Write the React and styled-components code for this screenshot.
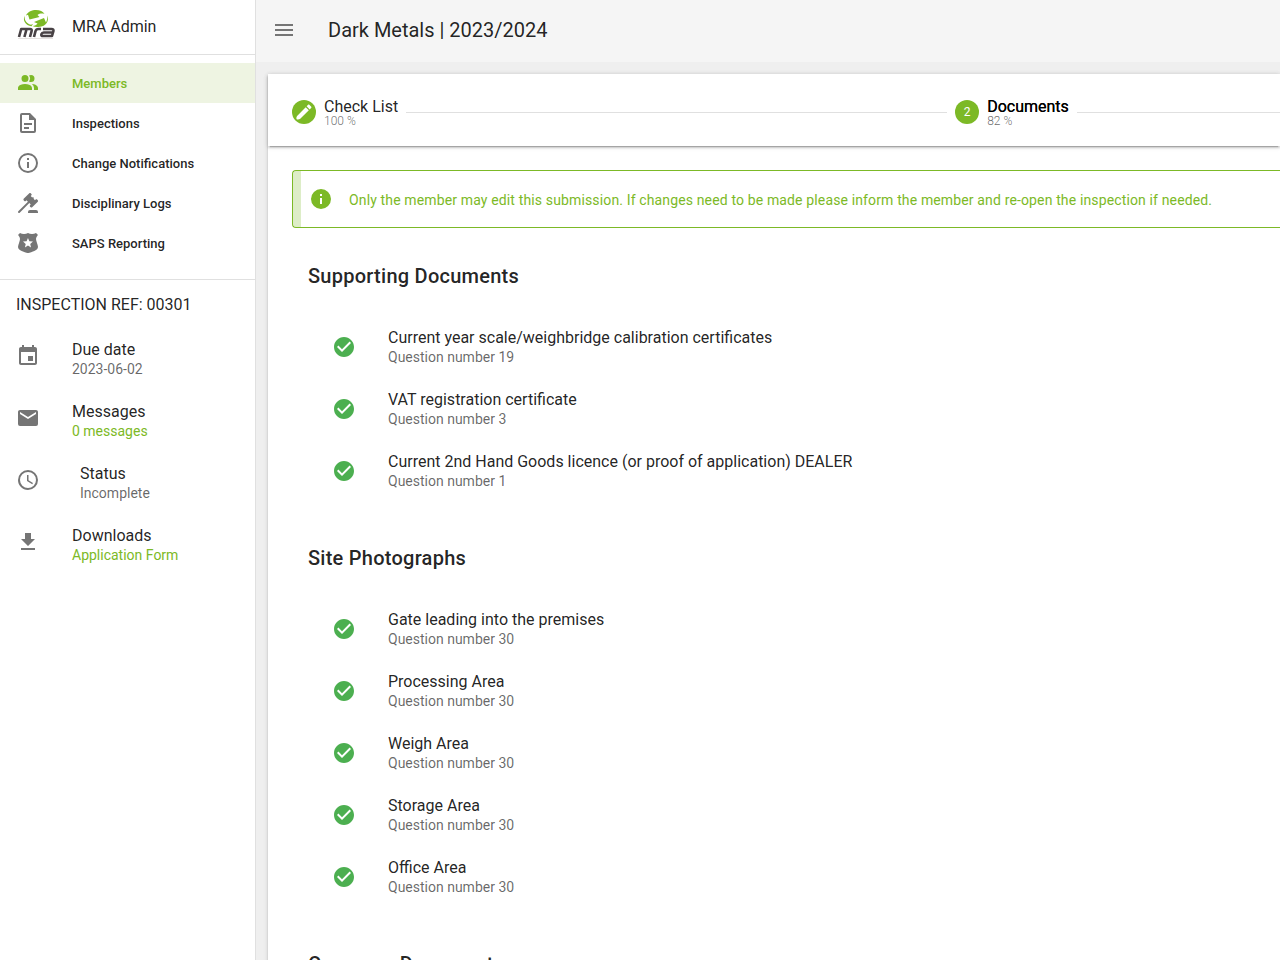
import React from "react";
import styled, { createGlobalStyle } from "styled-components";

const green = "#7cb926";
const ink = "rgba(0, 0, 0, 0.87)";
const muted = "rgba(0, 0, 0, 0.6)";
const line = "rgba(0, 0, 0, 0.12)";

const paths = {
  members:
    "M16 17V19H2V17S2 13 9 13 16 17 16 17M12.5 7.5A3.5 3.5 0 1 0 9 11A3.5 3.5 0 0 0 12.5 7.5M15.94 13A5.32 5.32 0 0 1 18 17V19H22V17S22 13.37 15.94 13M15 4A3.39 3.39 0 0 0 13.07 4.59A5 5 0 0 1 13.07 10.41A3.39 3.39 0 0 0 15 11A3.5 3.5 0 0 0 15 4Z",
  file: "M6,2A2,2 0 0,0 4,4V20A2,2 0 0,0 6,22H18A2,2 0 0,0 20,20V8L14,2H6M6,4H13V9H18V20H6V4M8,12V14H16V12H8M8,16V18H13V16H8Z",
  infoOutline:
    "M11,9H13V7H11M12,20C7.59,20 4,16.41 4,12C4,7.59 7.59,4 12,4C16.41,4 20,7.59 20,12C20,16.41 16.41,20 12,20M12,2A10,10 0 0,0 2,12A10,10 0 0,0 12,22A10,10 0 0,0 22,12A10,10 0 0,0 12,2M11,17H13V11H11V17Z",
  gavel:
    "M2.3,20.28L11.9,10.68L10.5,9.26L9.78,9.97C9.39,10.36 8.76,10.36 8.37,9.97L7.66,9.26C7.27,8.87 7.27,8.24 7.66,7.85L13.32,2.19C13.71,1.8 14.34,1.8 14.73,2.19L15.44,2.9C15.83,3.29 15.83,3.92 15.44,4.31L14.73,5L16.15,6.43C16.54,6.04 17.17,6.04 17.56,6.43C17.95,6.82 17.95,7.46 17.56,7.85L18.97,9.26L19.68,8.55C20.07,8.16 20.71,8.16 21.1,8.55L21.8,9.26C22.19,9.65 22.19,10.29 21.8,10.68L16.15,16.33C15.76,16.72 15.12,16.72 14.73,16.33L14.02,15.63C13.63,15.24 13.63,14.6 14.02,14.21L14.73,13.5L13.32,12.09L3.71,21.7C3.32,22.09 2.69,22.09 2.3,21.7C1.91,21.31 1.91,20.67 2.3,20.28M20,19A2,2 0 0,1 22,21V22H12V21A2,2 0 0,1 14,19H20Z",
  badge:
    "M22 4L20 2C18.85 2.64 17.4 3 16 3C14.6 3 13.14 2.63 12 2C10.86 2.63 9.4 3 8 3C6.6 3 5.15 2.64 4 2L2 4C2 4 4 6 4 8S2 14 2 16C2 20 12 22 12 22S22 20 22 16C22 14 20 10 20 8S22 4 22 4M15.05 16.45L11.97 14.59L8.9 16.45L9.72 12.95L7 10.61L10.58 10.3L11.97 7L13.37 10.29L16.95 10.6L14.23 12.94L15.05 16.45Z",
  calendar:
    "M17 12h-5v5h5v-5zM16 1v2H8V1H6v2H5c-1.11 0-1.99.9-1.99 2L3 19c0 1.1.89 2 2 2h14c1.1 0 2-.9 2-2V5c0-1.1-.9-2-2-2h-1V1h-2zm3 18H5V8h14v11z",
  email:
    "M20,8L12,13L4,8V6L12,11L20,6M20,4H4C2.89,4 2,4.89 2,6V18A2,2 0 0,0 4,20H20A2,2 0 0,0 22,18V6C22,4.89 21.1,4 20,4Z",
  clock:
    "M12,20A8,8 0 0,0 20,12A8,8 0 0,0 12,4A8,8 0 0,0 4,12A8,8 0 0,0 12,20M12,2A10,10 0 0,1 22,12A10,10 0 0,1 12,22C6.47,22 2,17.5 2,12A10,10 0 0,1 12,2M12.5,7V12.25L17,14.92L16.25,16.15L11,13V7H12.5Z",
  download: "M5,20H19V18H5M19,9H15V3H9V9H5L12,16L19,9Z",
  menu: "M3,6H21V8H3V6M3,11H21V13H3V11M3,16H21V18H3V16Z",
  edit: "M20.71,7.04C21.1,6.65 21.1,6 20.71,5.63L18.37,3.29C18,2.9 17.35,2.9 16.96,3.29L15.12,5.12L18.87,8.87M4,16.5C3,17.5 2.6,19 3,20.4C3.1,20.8 3.3,21 3.7,21C5,21.3 6.5,21 7.5,20.2L17.81,9.93L14.06,6.18Z",
  info: "M13,9H11V7H13M13,17H11V11H13M12,2A10,10 0 0,0 2,12A10,10 0 0,0 12,22A10,10 0 0,0 22,12A10,10 0 0,0 12,2Z",
  check:
    "M12 2C6.5 2 2 6.5 2 12S6.5 22 12 22 22 17.5 22 12 17.5 2 12 2M10 17L5 12L6.41 10.59L10 14.17L17.59 6.58L19 8L10 17Z",
};

const GlobalStyle = createGlobalStyle`
  *, *::before, *::after { box-sizing: border-box; }
  body {
    margin: 0;
    font-family: Roboto, "Liberation Sans", sans-serif;
    font-size: 16px;
    color: ${ink};
    background: #efefef;
  }
  h1, h2, p, ul, ol { margin: 0; padding: 0; }
  ul, ol { list-style: none; }
  a { text-decoration: none; color: inherit; }
`;

const Layout = styled.div`
  display: flex;
  height: 100vh;
  overflow: hidden;
`;

const Sidebar = styled.aside`
  flex: 0 0 256px;
  background: #fff;
  border-right: 1px solid ${line};
  overflow: hidden;
`;

const Brand = styled.div`
  display: flex;
  align-items: center;
  gap: 16px;
  height: 55px;
  padding: 0 16px 2px;
  border-bottom: 1px solid ${line};
`;

const Logo = styled.svg`
  width: 40px;
  height: 40px;
`;

const Nav = styled.nav`
  padding: 8px 0 16px;
  border-bottom: 1px solid ${line};
`;

const NavLink = styled.a`
  display: flex;
  align-items: center;
  gap: 32px;
  height: 40px;
  padding: 0 16px;
  font-size: 13px;
  font-weight: 500;
  color: ${(p) => (p.$active ? green : ink)};
  background: ${(p) => (p.$active ? "#eef4e2" : "transparent")};
`;

const IconSvg = styled.svg`
  flex: none;
  width: ${(p) => p.$size}px;
  height: ${(p) => p.$size}px;
  fill: ${(p) => p.$color};
`;

const Subheader = styled.p`
  && { padding: 1px 16px 0; }
  height: 48px;
  line-height: 48px;
`;

const Row = styled.li`
  display: flex;
  align-items: ${(p) => (p.$centered ? "center" : "flex-start")};
  gap: ${(p) => (p.$wide ? 40 : 32)}px;
  padding: 0 16px;
  & > svg { margin: ${(p) => (p.$centered ? 0 : "16px 0 0")}; }
`;

const RowText = styled.div`
  padding: 12px 0;
`;

const RowTitle = styled.p`
  line-height: 20px;
`;

const RowSub = styled.p`
  font-size: 14px;
  line-height: 18px;
  color: ${(p) => (p.$link ? green : muted)};
`;

const Main = styled.main`
  flex: 1;
  min-width: 0;
  display: flex;
  flex-direction: column;
`;

const TopBar = styled.header`
  flex: none;
  display: flex;
  align-items: center;
  gap: 32px;
  height: 62px;
  padding: 0 16px 2px;
  background: #f5f5f5;
`;

const MenuButton = styled.button`
  display: flex;
  padding: 0;
  border: 0;
  background: none;
  cursor: pointer;
`;

const PageTitle = styled.h1`
  font-size: 20px;
  font-weight: 400;
  line-height: 24px;
`;

const Scroller = styled.div`
  flex: 1;
  min-height: 0;
  overflow-y: auto;
  scrollbar-width: none;
  padding: 12px 0 0 12px;
`;

const elevation = `0 3px 1px -2px rgba(0, 0, 0, 0.2),
    0 2px 2px 0 rgba(0, 0, 0, 0.14),
    0 1px 5px 0 rgba(0, 0, 0, 0.12)`;

const Sheet = styled.section`
  background: #fff;
  box-shadow: ${elevation};
`;

const Steps = styled.ol`
  && { padding: 26px 0 22px 24px; }
  display: grid;
  grid-template-columns: 49fr 24fr;
  box-shadow: ${elevation};
`;

const Step = styled.li`
  display: flex;
  align-items: center;
  gap: 8px;
  height: 24px;
  padding-right: ${(p) => (p.$last ? 0 : 8)}px;
  &::after {
    content: "";
    flex: 1;
    height: 1px;
    background: ${line};
  }
`;

const StepBadge = styled.span`
  display: flex;
  align-items: center;
  justify-content: center;
  width: 24px;
  height: 24px;
  border-radius: 50%;
  font-size: 12px;
  color: #fff;
  background: ${green};
`;

const StepLabel = styled.div`
  padding-top: 2px;
  line-height: 16px;
  color: ${(p) => (p.$current ? "#000" : ink)};
  text-shadow: ${(p) => (p.$current ? "0 0 0 #000" : "none")};
`;

const StepProgress = styled.small`
  display: block;
  font-size: 12px;
  font-weight: 300;
  line-height: 12px;
  color: ${muted};
  text-shadow: none;
`;

const Body = styled.div`
  padding: 24px 0 24px 24px;
`;

const Alert = styled.div`
  display: flex;
  align-items: center;
  gap: 16px;
  height: 58px;
  margin-bottom: 16px;
  border: 1px solid ${green};
  border-right: 0;
  border-radius: 4px 0 0 4px;
  color: ${green};
  font-size: 14px;
  letter-spacing: 0.01em;
  white-space: nowrap;
  overflow: hidden;
  &::before {
    content: "";
    align-self: stretch;
    width: 8px;
    margin-right: -8px;
    background: ${green};
    opacity: 0.26;
  }
`;

const AlertText = styled.p`
  && { padding-top: 2px; }
`;

const Group = styled.section`
  margin-bottom: 16px;
`;

const GroupTitle = styled.h2`
  && { padding: 16px; }
  font-size: 20px;
  font-weight: 500;
  line-height: 32px;
  letter-spacing: 0.0125em;
`;

const List = styled.ul`
  && { padding: ${(p) => (p.$inset ? "8px 24px" : "0")}; }
`;

function Icon({ name, size = 24, color = "#757575" }) {
  return (
    <IconSvg viewBox="0 0 24 24" $size={size} $color={color} aria-hidden="true">
      <path d={paths[name]} />
    </IconSvg>
  );
}

function BrandLogo() {
  return (
    <Logo viewBox="0 0 40 40" role="img" aria-label="MRA logo">
      <g fill={green}>
        <path d="M10 9.500C12 5.500 16 4 20 4C24 4 27 5.500 28.500 8C26 7.200 23.500 7.500 21.500 9L23.500 11L13.500 13.500L12 8.800Z" />
        <path d="M31 9.500C33.500 14 31 20.500 22.500 21C20 21.200 18 20.800 16.500 20C19 19.800 20.500 19 21.500 17.500L18 16L28 12L30 16.500C31 14.500 31.500 12 31 9.500Z" />
        <path d="M9 9.500C7.800 13 10 17.500 15 18.800L17 18L15.500 20.300C9.500 19.500 6 14 9 9.500Z" />
      </g>
      <g fill="none" stroke="#484245" strokeWidth="2.6" strokeLinejoin="round">
        <path d="M3 31L5.200 23H14Q16.200 23 15.600 25.200L14 31M10.600 23L8.400 31" />
        <path d="M18 31L19.500 25.200Q20.200 23 22.500 23H25" />
        <path d="M27 23H35.500Q38 23 37.400 25.200L36 30H27Q24.800 30 25.400 28.200T28 26.500H36.500" />
      </g>
      <path stroke="#e6e2e0" strokeWidth="1" d="M2 32.500H37" />
    </Logo>
  );
}

const navItems = [
  ["members", "Members"],
  ["file", "Inspections"],
  ["infoOutline", "Change Notifications"],
  ["gavel", "Disciplinary Logs"],
  ["badge", "SAPS Reporting"],
];

const details = [
  { icon: "calendar", title: "Due date", sub: "2023-06-02" },
  { icon: "email", title: "Messages", sub: "0 messages", link: true },
  { icon: "clock", title: "Status", sub: "Incomplete", wide: true },
  { icon: "download", title: "Downloads", sub: "Application Form", link: true },
];

const groups = [
  {
    title: "Supporting Documents",
    items: [
      ["Current year scale/weighbridge calibration certificates", 19],
      ["VAT registration certificate", 3],
      ["Current 2nd Hand Goods licence (or proof of application) DEALER", 1],
    ],
  },
  {
    title: "Site Photographs",
    items: [
      ["Gate leading into the premises", 30],
      ["Processing Area", 30],
      ["Weigh Area", 30],
      ["Storage Area", 30],
      ["Office Area", 30],
    ],
  },
  { title: "Company Documents", items: [] },
];

export default function App() {
  return (
    <Layout>
      <GlobalStyle />
      <Sidebar>
        <Brand>
          <BrandLogo />
          <span>MRA Admin</span>
        </Brand>
        <Nav>
          {navItems.map(([icon, label], i) => (
            <NavLink key={label} href="#" $active={i === 0}>
              <Icon name={icon} color={i === 0 ? green : undefined} />
              {label}
            </NavLink>
          ))}
        </Nav>
        <Subheader>INSPECTION REF: 00301</Subheader>
        <List>
          {details.map((d) => (
            <Row key={d.title} $wide={d.wide}>
              <Icon name={d.icon} />
              <RowText>
                <RowTitle>{d.title}</RowTitle>
                <RowSub $link={d.link}>{d.link ? <a href="#">{d.sub}</a> : d.sub}</RowSub>
              </RowText>
            </Row>
          ))}
        </List>
      </Sidebar>
      <Main>
        <TopBar>
          <MenuButton type="button" aria-label="Toggle menu">
            <Icon name="menu" />
          </MenuButton>
          <PageTitle>Dark Metals | 2023/2024</PageTitle>
        </TopBar>
        <Scroller>
          <Sheet>
            <Steps>
              <Step>
                <StepBadge>
                  <Icon name="edit" size={20} color="#fff" />
                </StepBadge>
                <StepLabel>
                  Check List
                  <StepProgress>100 %</StepProgress>
                </StepLabel>
              </Step>
              <Step $last>
                <StepBadge>2</StepBadge>
                <StepLabel $current>
                  Documents
                  <StepProgress>82 %</StepProgress>
                </StepLabel>
              </Step>
            </Steps>
            <Body>
              <Alert role="status">
                <Icon name="info" color={green} />
                <AlertText>
                  Only the member may edit this submission. If changes need to be made please inform
                  the member and re-open the inspection if needed.
                </AlertText>
              </Alert>
              {groups.map((g) => (
                <Group key={g.title}>
                  <GroupTitle>{g.title}</GroupTitle>
                  <List $inset>
                    {g.items.map(([title, number]) => (
                      <Row key={title} $centered>
                        <Icon name="check" color="#4caf50" />
                        <RowText>
                          <RowTitle>{title}</RowTitle>
                          <RowSub>Question number {number}</RowSub>
                        </RowText>
                      </Row>
                    ))}
                  </List>
                </Group>
              ))}
            </Body>
          </Sheet>
        </Scroller>
      </Main>
    </Layout>
  );
}
